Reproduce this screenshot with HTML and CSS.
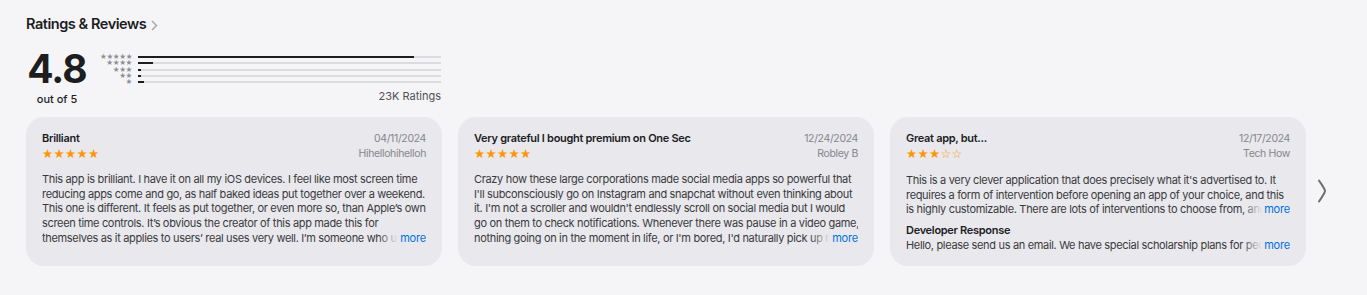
FILE: index.html
```html
<!DOCTYPE html>
<html lang="en">
<head>
  <meta charset="UTF-8">
  <meta name="viewport" content="width=device-width, initial-scale=1.0">
  <title>Ratings &amp; Reviews</title>
  <link rel="stylesheet" href="styles.css">
</head>
<body>
  <section class="ratings">
    <h2 class="section-title">
      Ratings &amp; Reviews
      <svg class="title-chevron" width="7" height="11" viewBox="0 0 7 11"><path d="M1 1l4.5 4.5L1 10" fill="none" stroke="#a1a1a6" stroke-width="1.3"/></svg>
    </h2>

    <!-- Summary -->
    <div class="summary">
      <div class="score">
        <div class="score-value">4.8</div>
        <div class="score-caption">out of 5</div>
      </div>
      <div class="histogram">
        <div class="hist-row"><span class="hist-stars">★★★★★</span><span class="hist-track"><span class="hist-fill" style="width: 91%"></span></span></div>
        <div class="hist-row"><span class="hist-stars">★★★★</span><span class="hist-track"><span class="hist-fill" style="width: 5%"></span></span></div>
        <div class="hist-row"><span class="hist-stars">★★★</span><span class="hist-track"><span class="hist-fill" style="width: 1%"></span></span></div>
        <div class="hist-row"><span class="hist-stars">★★</span><span class="hist-track"><span class="hist-fill" style="width: 1%"></span></span></div>
        <div class="hist-row"><span class="hist-stars">★</span><span class="hist-track"><span class="hist-fill" style="width: 2%"></span></span></div>
        <div class="hist-total">23K Ratings</div>
      </div>
    </div>

    <!-- Reviews -->
    <div class="reviews">
      <div class="review-card">
        <div class="review-head">
          <div>
            <div class="review-title">Brilliant</div>
            <div class="review-stars">★★★★★</div>
          </div>
          <div class="review-meta">
            <div>04/11/2024</div>
            <div>Hihellohihelloh</div>
          </div>
        </div>
        <div class="review-body clamp-5">
          <p>This app is brilliant. I have it on all my iOS devices. I feel like most screen time<br>
          reducing apps come and go, as half baked ideas put together over a weekend.<br>
          This one is different. It feels as put together, or even more so, than Apple’s own<br>
          screen time controls. It’s obvious the creator of this app made this for<br>
          themselves as it applies to users’ real uses very well. I’m someone who uses my phone far too much.</p>
          <a class="more" href="#">more</a>
        </div>
      </div>

      <div class="review-card">
        <div class="review-head">
          <div>
            <div class="review-title">Very grateful I bought premium on One Sec</div>
            <div class="review-stars">★★★★★</div>
          </div>
          <div class="review-meta">
            <div>12/24/2024</div>
            <div>Robley B</div>
          </div>
        </div>
        <div class="review-body clamp-5">
          <p>Crazy how these large corporations made social media apps so powerful that<br>
          I'll subconsciously go on Instagram and snapchat without even thinking about<br>
          it. I'm not a scroller and wouldn't endlessly scroll on social media but I would<br>
          go on them to check notifications. Whenever there was pause in a video game,<br>
          nothing going on in the moment in life, or I'm bored, I'd naturally pick up my phone.</p>
          <a class="more" href="#">more</a>
        </div>
      </div>

      <div class="review-card">
        <div class="review-head">
          <div>
            <div class="review-title">Great app, but...</div>
            <div class="review-stars">★★★<span class="star-empty">☆☆</span></div>
          </div>
          <div class="review-meta">
            <div>12/17/2024</div>
            <div>Tech How</div>
          </div>
        </div>
        <div class="review-body clamp-3">
          <p>This is a very clever application that does precisely what it's advertised to. It<br>
          requires a form of intervention before opening an app of your choice, and this<br>
          is highly customizable. There are lots of interventions to choose from, and each works well.</p>
          <a class="more" href="#">more</a>
        </div>
        <div class="dev-title">Developer Response</div>
        <div class="review-body clamp-1">
          <p>Hello, please send us an email. We have special scholarship plans for people who cannot afford it.</p>
          <a class="more" href="#">more</a>
        </div>
      </div>

      <button class="next-btn" aria-label="Next">
        <svg width="10" height="24" viewBox="0 0 10 24"><path d="M2 1.5C5.5 7 8 10 8 12s-2.5 5-6 10.5" fill="none" stroke="#6e6e73" stroke-width="2" stroke-linecap="round"/></svg>
      </button>
    </div>
  </section>
</body>
</html>
```

FILE: styles.css
```css
body {
  margin: 0;
  background-color: #f5f5f7;
  font-family: "Inter", "Noto Sans", sans-serif;
  color: #1d1d1f;
}

.ratings {
  padding: 14px 26px 0 26px;
}

.section-title {
  margin: 0;
  font-size: 14.5px;
  line-height: 20px;
  font-weight: 600;
  letter-spacing: -0.45px;
  display: flex;
  align-items: center;
  gap: 5px;
}

.title-chevron {
  margin-top: 2px;
}

/* summary */
.summary {
  display: flex;
  margin-top: 15px;
  width: 415px;
}

.score {
  width: 62px;
  text-align: center;
}

.score-value {
  font-size: 39px;
  line-height: 40px;
  font-weight: 700;
  letter-spacing: -1px;
}

.score-caption {
  font-size: 11px;
  line-height: 14px;
  font-weight: 500;
  color: #1d1d1f;
  margin-top: 3px;
}

.histogram {
  flex: 1;
  margin-left: 12px;
  padding-top: 5px;
}

.hist-row {
  display: flex;
  align-items: center;
  height: 6.3px;
}

.hist-stars {
  width: 32px;
  text-align: right;
  font-family: "DejaVu Sans", sans-serif;
  font-size: 7.6px;
  line-height: 6px;
  letter-spacing: -0.4px;
  color: #8e8e93;
}

.hist-track {
  flex: 1;
  height: 2px;
  margin-left: 6px;
  background-color: #dcdce0;
}

.hist-fill {
  display: block;
  height: 100%;
  background-color: #1d1d1f;
}

.hist-total {
  text-align: right;
  font-size: 11px;
  line-height: 14px;
  color: #515154;
  margin-top: 4px;
}

/* reviews */
.reviews {
  display: flex;
  gap: 16px;
  margin-top: 11px;
}

.review-card {
  width: 416px;
  height: 149px;
  box-sizing: border-box;
  padding: 14px 16px 0 16px;
  background-color: #e8e8ed;
  border-radius: 18px;
}

.review-head {
  display: flex;
  justify-content: space-between;
  line-height: 15px;
}

.review-title {
  font-size: 11px;
  font-weight: 600;
  letter-spacing: -0.3px;
}

.review-stars {
  font-family: "DejaVu Sans", sans-serif;
  font-size: 12.5px;
  line-height: 15px;
  letter-spacing: 0.3px;
  color: #ff9500;
}

.star-empty {
  font-size: 12px;
}

.review-meta {
  text-align: right;
  font-size: 10.5px;
  letter-spacing: -0.35px;
  color: #86868b;
}

.review-body {
  position: relative;
  overflow: hidden;
  margin-top: 11px;
}

.review-body p {
  margin: 0;
  font-size: 11px;
  line-height: 14.7px;
  letter-spacing: -0.33px;
  white-space: nowrap;
  color: #3a3a3c;
}

.clamp-5 {
  height: 73.5px;
}

.clamp-3 {
  height: 44.1px;
}

.clamp-1 {
  height: 14.7px;
  margin-top: 0;
}

.more {
  position: absolute;
  right: 0;
  bottom: 0;
  padding-left: 22px;
  font-size: 11px;
  line-height: 14.7px;
  letter-spacing: -0.2px;
  color: #0071e3;
  text-decoration: none;
  background: linear-gradient(to right, rgba(232, 232, 237, 0), #e8e8ed 20px);
}

.dev-title {
  font-size: 11px;
  font-weight: 600;
  line-height: 15px;
  letter-spacing: -0.3px;
  margin-top: 6px;
}

.next-btn {
  align-self: center;
  width: 20px;
  padding: 0;
  border: none;
  background: none;
  margin-left: -10px;
  margin-top: 2px;
  cursor: pointer;
}
```
